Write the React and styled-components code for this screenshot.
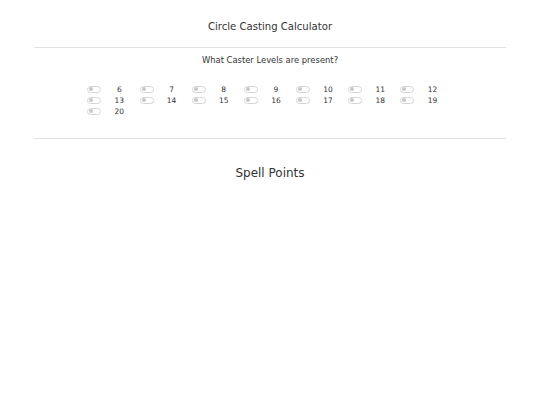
import { createGlobalStyle, styled } from "styled-components";

const GlobalStyle = createGlobalStyle`
  body {
    margin: 0;
    background: #fff;
    color: #333;
    font-family: "DejaVu Sans", sans-serif;
  }
`;

const levels = [6, 7, 8, 9, 10, 11, 12, 13, 14, 15, 16, 17, 18, 19, 20];

function Toggle() {
  return (
    <Switch>
      <Knob />
    </Switch>
  );
}

export default function App() {
  return (
    <>
      <GlobalStyle />
      <Page>
        <Title>Circle Casting Calculator</Title>
        <Rule />
        <Question>What Caster Levels are present?</Question>
        <LevelGrid>
          {levels.map((level) => (
            <LevelCell key={level}>
              <Toggle />
              <LevelNumber>{level}</LevelNumber>
            </LevelCell>
          ))}
        </LevelGrid>
        <Rule />
        <Heading>Spell Points</Heading>
      </Page>
    </>
  );
}

const Page = styled.div`
  width: 472px;
  margin: 0 auto;
  padding-top: 21px;
  display: flex;
  flex-direction: column;
  align-items: stretch;
`;

const Title = styled.h1`
  margin: 0 0 14px;
  font-size: 10.1px;
  font-weight: normal;
  line-height: 12px;
  text-align: center;
`;

const Rule = styled.hr`
  width: 100%;
  margin: 0;
  border: 0;
  border-top: 1px solid #e2e2e2;
`;

const Question = styled.p`
  margin: 6px 0 0;
  font-size: 8.4px;
  line-height: 12px;
  text-align: center;
`;

const LevelGrid = styled.div`
  margin: 19px auto 23px;
  display: grid;
  grid-template-columns: repeat(7, 52.2px);
  row-gap: 3px;
`;

const LevelCell = styled.label`
  display: flex;
  align-items: center;
  height: 8px;
`;

const Switch = styled.span`
  box-sizing: border-box;
  width: 14px;
  height: 7px;
  border: 1px solid #d6d6d6;
  border-radius: 4px;
  display: flex;
  align-items: center;
  padding-left: 1px;
`;

const Knob = styled.span`
  width: 4px;
  height: 4px;
  border-radius: 50%;
  background: #c8c8c8;
`;

const LevelNumber = styled.span`
  width: 36px;
  text-align: center;
  font-size: 7.5px;
`;

const Heading = styled.h2`
  margin: 26px 0 0;
  font-size: 12px;
  font-weight: normal;
  line-height: 16px;
  text-align: center;
`;
